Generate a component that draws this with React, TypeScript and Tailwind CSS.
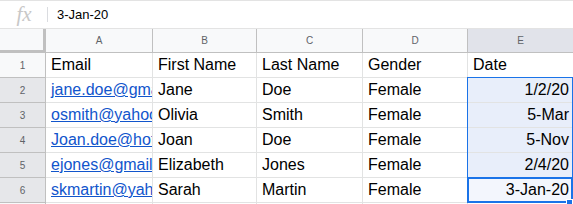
import React from "react";

const rows = [
  ["Email", "First Name", "Last Name", "Gender", "Date"],
  ["jane.doe@gmail.com", "Jane", "Doe", "Female", "1/2/20"],
  ["osmith@yahoo.com", "Olivia", "Smith", "Female", "5-Mar"],
  ["Joan.doe@hotmail.com", "Joan", "Doe", "Female", "5-Nov"],
  ["ejones@gmail.com", "Elizabeth", "Jones", "Female", "2/4/20"],
  ["skmartin@yahoo.com", "Sarah", "Martin", "Female", "3-Jan-20"],
  ["", "", "", "", ""],
];

const letters = ["A", "B", "C", "D", "E"];

export default function App() {
  return (
    <div
      className="w-[573px] h-[204px] overflow-hidden bg-white"
      style={{ fontFamily: '"Liberation Sans", Arial, sans-serif' }}
    >
      {/* formula bar */}
      <div className="h-[29px] border-t border-b border-[#e3e3e3] flex items-center">
        <div className="w-[47px] flex justify-center pl-[1px]">
          <span
            className="text-[21px] italic text-[#c8c8c8] leading-none"
            style={{ fontFamily: '"Liberation Serif", "Times New Roman", serif' }}
          >
            fx
          </span>
        </div>
        <div className="w-px h-[15px] bg-[#dadce0]" />
        <div className="pl-[9px] text-[13px] text-black">3-Jan-20</div>
      </div>

      {/* grid */}
      <div className="relative">
        <div className="grid grid-cols-[46px_107px_104px_106px_105px_105px]">
          {/* header row */}
          <div className="h-[24px] bg-[#f8f9fa] border-r-[3px] border-b-[3px] border-[#c0c0c0]" />
          {letters.map((l, i) => (
            <div
              key={l}
              className={
                "h-[24px] flex items-center justify-center text-[10px] text-[#5f6368] border-b border-[#c0c0c0] " +
                (i < 4 ? "border-r " : "") +
                (i === 4 ? "bg-[#e1e3ea]" : "bg-[#f8f9fa]")
              }
            >
              {l}
            </div>
          ))}

          {rows.map((r, ri) => {
            const sel = ri >= 1 && ri <= 5;
            return (
              <React.Fragment key={ri}>
                <div
                  className={
                    "h-[25px] flex items-center justify-center text-[10px] text-[#5f6368] border-r border-b border-[#c0c0c0] " +
                    (sel ? "bg-[#e6e7ea]" : "bg-[#f8f9fa]")
                  }
                >
                  {ri + 1}
                </div>
                {r.map((c, ci) => {
                  const isLink = ri >= 1 && ci === 0;
                  const isDate = ci === 4;
                  const isSel = sel && ci === 4;
                  return (
                    <div
                      key={ci}
                      className={
                        "h-[25px] overflow-hidden whitespace-nowrap flex items-center text-[16px] border-b border-[#e2e3e3] " +
                        (ci < 4 ? "border-r " : "") +
                        (isDate && ri >= 1 ? "justify-end pr-[4px] " : "pl-[5px] ") +
                        (isSel ? (ri === 5 ? "bg-[#f3f6fd] " : "bg-[#e8eefa] ") : "")
                      }
                    >
                      {isLink ? (
                        <span className="text-[#1155cc] underline">{c}</span>
                      ) : (
                        <span className="text-black">{c}</span>
                      )}
                    </div>
                  );
                })}
              </React.Fragment>
            );
          })}
        </div>

        {/* selection range overlay */}
        <div className="absolute left-[467px] top-[48px] w-[106px] h-[126px] border border-[#1a73e8] pointer-events-none" />
        {/* active cell */}
        <div className="absolute left-[467px] top-[148px] w-[106px] h-[26px] border-2 border-[#1a73e8] pointer-events-none" />
        {/* fill handle */}
        <div className="absolute left-[566px] top-[170px] w-[7px] h-[7px] bg-[#1a73e8] border border-white pointer-events-none" />
      </div>
    </div>
  );
}
